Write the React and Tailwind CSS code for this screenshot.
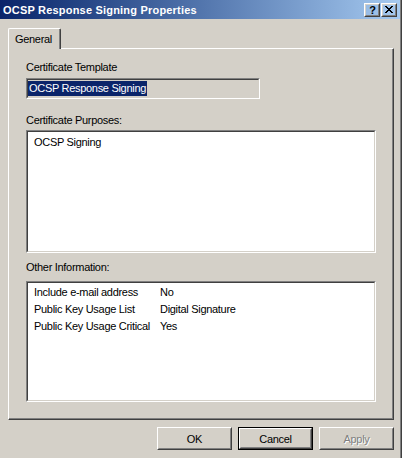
import React from "react";

function Raised({ className = "", children, inner = "" }) {
  return (
    <div className={`border border-t-white border-l-white border-r-[#404040] border-b-[#404040] ${className}`}>
      <div className={`h-full w-full border border-t-[#d4d0c8] border-l-[#d4d0c8] border-r-[#808080] border-b-[#808080] ${inner}`}>
        {children}
      </div>
    </div>
  );
}

function Sunken({ className = "", children, inner = "" }) {
  return (
    <div className={`border border-t-[#808080] border-l-[#808080] border-r-white border-b-white ${className}`}>
      <div className={`h-full w-full border border-t-[#404040] border-l-[#404040] border-r-[#d4d0c8] border-b-[#d4d0c8] ${inner}`}>
        {children}
      </div>
    </div>
  );
}

function CloseGlyph() {
  const rows = [
    "xx....xx",
    ".xx..xx.",
    "..xxxx..",
    "...xx...",
    "..xxxx..",
    ".xx..xx.",
    "xx....xx",
  ];
  const rects = [];
  rows.forEach((r, y) =>
    r.split("").forEach((c, x) => {
      if (c === "x") rects.push(<rect key={`${x}-${y}`} x={x} y={y} width="1" height="1" fill="#000" />);
    })
  );
  return (
    <svg width="8" height="7" viewBox="0 0 8 7" shapeRendering="crispEdges">
      {rects}
    </svg>
  );
}

function Button({ label, isDefault, disabled }) {
  const content = (
    <Raised className="w-full h-full" inner="flex items-center justify-center">
      <span
        className={
          disabled
            ? "text-[#808080] [text-shadow:1px_1px_0_#ffffff]"
            : "text-black"
        }
      >
        {label}
      </span>
    </Raised>
  );
  if (isDefault) {
    return <div className="w-[75px] h-[23px] border border-black">{content}</div>;
  }
  return <div className="w-[75px] h-[23px]">{content}</div>;
}

export default function App() {
  return (
    <div className="w-[402px] h-[458px] bg-[#d4d0c8] border-r border-r-[#404040] overflow-hidden font-['Liberation_Sans',Arial,sans-serif] text-[11px] tracking-[-0.3px] text-black leading-[14px]">
      <div className="h-full border-r border-r-[#808080] flex flex-col">
        {/* Title bar */}
        <div className="h-[19px] flex items-center bg-gradient-to-r from-[#0a246a] to-[#a6caf0] pl-[3px] pr-[3px]">
          <span className="text-white font-bold tracking-[0.2px] leading-[13px] pt-[1px]">
            OCSP Response Signing Properties
          </span>
          <div className="ml-auto flex gap-[1px]">
            <Raised className="w-[16px] h-[14px]" inner="flex items-center justify-center">
              <span className="font-bold text-[11px] leading-[10px] tracking-normal pl-[1px]">?</span>
            </Raised>
            <Raised className="w-[16px] h-[14px]" inner="flex items-center justify-center">
              <CloseGlyph />
            </Raised>
          </div>
        </div>

        {/* Body */}
        <div className="flex-1 pl-[8px] pr-[6px] pt-[9px] flex flex-col">
          {/* Tabs */}
          <div className="flex">
            <div className="relative z-10 -mb-px h-[21px] w-[53px] bg-[#d4d0c8] border-l border-t border-r border-l-white border-t-white border-r-[#404040] rounded-tl-[2px] rounded-tr-[2px]">
              <div className="h-full w-full border-r border-r-[#808080] flex items-center justify-center pr-[1px]">
                General
              </div>
            </div>
          </div>

          {/* Panel */}
          <div className="h-[372px] border border-t-white border-l-white border-r-[#404040] border-b-[#404040]">
            <div className="h-full border-r border-b border-r-[#808080] border-b-[#808080] pl-[17px] pt-[11px] flex flex-col">
              <div>Certificate Template</div>
              <Sunken className="mt-[4px] w-[234px] h-[21px]" inner="flex items-center pl-[0px]">
                <span className="bg-[#0a246a] text-white px-[1px] leading-[15px]">OCSP Response Signing</span>
              </Sunken>

              <div className="mt-[14px]">Certificate Purposes:</div>
              <Sunken className="mt-[3px] w-[350px] h-[123px]" inner="bg-white pl-[6px] pt-[3px]">
                <div>OCSP Signing</div>
              </Sunken>

              <div className="mt-[7px]">Other Information:</div>
              <Sunken className="mt-[7px] w-[350px] h-[121px]" inner="bg-white pl-[6px] pt-[1px]">
                <div className="grid grid-cols-[126px_1fr] leading-[17px]">
                  <div>Include e-mail address</div>
                  <div>No</div>
                  <div>Public Key Usage List</div>
                  <div>Digital Signature</div>
                  <div>Public Key Usage Critical</div>
                  <div>Yes</div>
                </div>
              </Sunken>
            </div>
          </div>

          {/* Buttons */}
          <div className="mt-[7px] flex justify-end gap-[6px]">
            <Button label="OK" />
            <Button label="Cancel" isDefault />
            <Button label="Apply" disabled />
          </div>
        </div>
      </div>
    </div>
  );
}
